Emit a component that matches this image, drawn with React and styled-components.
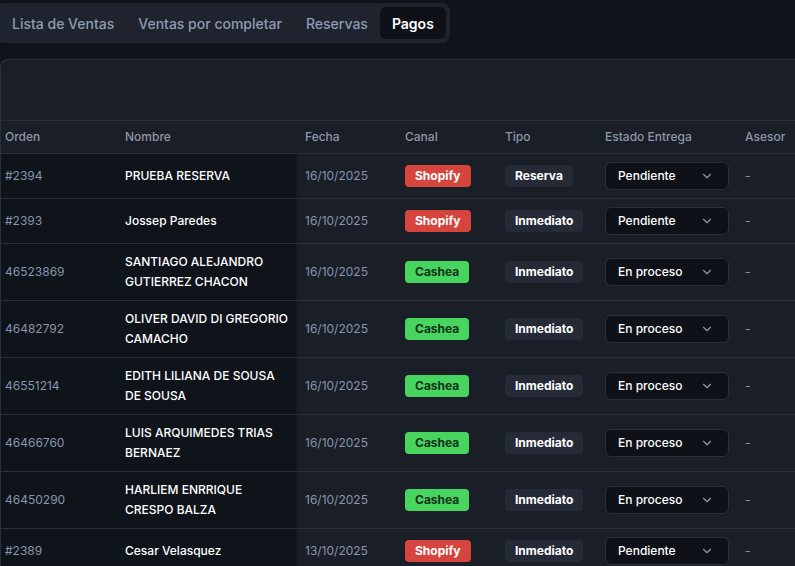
import React from "react";
import styled, { createGlobalStyle } from "styled-components";

const Global = createGlobalStyle`
  html, body { margin: 0; padding: 0; background: #0f131a; overflow: hidden; }
  body { font-family: Inter, "Noto Sans", sans-serif; color: #e8ecf2; }
  * { box-sizing: border-box; }
`;

const Page = styled.div`
  width: 795px;
  height: 566px;
  overflow: hidden;
  padding-top: 3px;
  display: flex;
  flex-direction: column;
  gap: 16px;
`;

const TabBar = styled.div`
  display: inline-flex;
  align-self: flex-start;
  margin-left: -4px;
  padding: 4px;
  background: #1e232d;
  border-radius: 8px;
`;

const Tab = styled.div`
  height: 32px;
  padding: 0 12px;
  display: flex;
  align-items: center;
  font-size: 14px;
  font-weight: ${(p) => (p.$active ? 600 : 500)};
  color: ${(p) => (p.$active ? "#ffffff" : "#8d9cb3")};
  background: ${(p) => (p.$active ? "#0e1117" : "transparent")};
  border-radius: 6px;
  white-space: nowrap;
`;

const Panel = styled.div`
  width: 830px;
  flex: 1;
  background: #1a1e27;
  border: 1px solid #2a303b;
  border-right: none;
  border-bottom: none;
  border-radius: 8px 0 0 0;
  overflow: hidden;
`;

const PanelTop = styled.div`
  height: 60px;
`;

const Table = styled.table`
  margin-left: -4px;
  border-collapse: collapse;
  table-layout: fixed;
  width: 840px;
  font-size: 12px;
`;

const Th = styled.th`
  text-align: left;
  font-weight: 500;
  color: #8b97a9;
  height: 33px;
  padding: 0 8px 1px;
  border-top: 1px solid #2a303b;
  border-bottom: 1px solid #2a303b;
  background: #1a1e27;
  white-space: nowrap;
`;

const Tr = styled.tr`
  border-bottom: 1px solid #2a303b;
`;

const Td = styled.td`
  padding: 8px 8px;
  vertical-align: middle;
  line-height: 20px;
  background: ${(p) => (p.$sticky ? "#0f131a" : "transparent")};
  color: ${(p) => (p.$muted ? "#8796ac" : "#ffffff")};
  font-weight: ${(p) => (p.$strong ? 500 : 400)};
  ${(p) => (p.$edge ? "box-shadow: inset -1px 0 0 #141820;" : "")}
`;

const Badge = styled.span`
  display: inline-flex;
  align-items: center;
  height: 22px;
  padding: 0 10px;
  border-radius: 4px;
  font-weight: 700;
  font-size: 12px;
  background: ${(p) => p.$bg};
  color: ${(p) => p.$fg};
`;

const Select = styled.div`
  width: 124px;
  height: 28px;
  display: flex;
  align-items: center;
  justify-content: space-between;
  padding: 0 14px 0 12px;
  background: #0e1117;
  border: 1px solid #2a2f3a;
  border-radius: 6px;
  color: #ffffff;
  font-size: 12px;
  font-weight: 500;
`;

const Dash = styled.span`
  color: #8796ac;
`;

const Chevron = () => (
  <svg width="14" height="14" viewBox="0 0 24 24" fill="none" stroke="#8f99a8" strokeWidth="2" strokeLinecap="round" strokeLinejoin="round">
    <path d="M6 9l6 6 6-6" />
  </svg>
);

const channels = {
  Shopify: { bg: "#d6443e", fg: "#ffffff" },
  Cashea: { bg: "#47d45f", fg: "#10301a" },
};

const rows = [
  ["#2394", "PRUEBA RESERVA", "16/10/2025", "Shopify", "Reserva", "Pendiente"],
  ["#2393", "Jossep Paredes", "16/10/2025", "Shopify", "Inmediato", "Pendiente"],
  ["46523869", "SANTIAGO ALEJANDRO GUTIERREZ CHACON", "16/10/2025", "Cashea", "Inmediato", "En proceso"],
  ["46482792", "OLIVER DAVID DI GREGORIO CAMACHO", "16/10/2025", "Cashea", "Inmediato", "En proceso"],
  ["46551214", "EDITH LILIANA DE SOUSA DE SOUSA", "16/10/2025", "Cashea", "Inmediato", "En proceso"],
  ["46466760", "LUIS ARQUIMEDES TRIAS BERNAEZ", "16/10/2025", "Cashea", "Inmediato", "En proceso"],
  ["46450290", "HARLIEM ENRRIQUE CRESPO BALZA", "16/10/2025", "Cashea", "Inmediato", "En proceso"],
  ["#2389", "Cesar Velasquez", "13/10/2025", "Shopify", "Inmediato", "Pendiente"],
];

export default function App() {
  return (
    <>
      <Global />
      <Page>
        <TabBar>
          <Tab>Lista de Ventas</Tab>
          <Tab>Ventas por completar</Tab>
          <Tab>Reservas</Tab>
          <Tab $active>Pagos</Tab>
        </TabBar>
        <Panel>
          <PanelTop />
          <Table>
            <colgroup>
              <col style={{ width: 120 }} />
              <col style={{ width: 180 }} />
              <col style={{ width: 100 }} />
              <col style={{ width: 100 }} />
              <col style={{ width: 100 }} />
              <col style={{ width: 140 }} />
              <col style={{ width: 100 }} />
            </colgroup>
            <thead>
              <tr>
                <Th>Orden</Th>
                <Th>Nombre</Th>
                <Th>Fecha</Th>
                <Th>Canal</Th>
                <Th>Tipo</Th>
                <Th>Estado Entrega</Th>
                <Th>Asesor</Th>
              </tr>
            </thead>
            <tbody>
              {rows.map((r) => (
                <Tr key={r[0]}>
                  <Td $sticky $muted>{r[0]}</Td>
                  <Td $sticky $strong $edge>{r[1]}</Td>
                  <Td $muted>{r[2]}</Td>
                  <Td>
                    <Badge $bg={channels[r[3]].bg} $fg={channels[r[3]].fg}>{r[3]}</Badge>
                  </Td>
                  <Td>
                    <Badge $bg="#252b36" $fg="#ffffff">{r[4]}</Badge>
                  </Td>
                  <Td>
                    <Select>
                      <span>{r[5]}</span>
                      <Chevron />
                    </Select>
                  </Td>
                  <Td>
                    <Dash>-</Dash>
                  </Td>
                </Tr>
              ))}
            </tbody>
          </Table>
        </Panel>
      </Page>
    </>
  );
}
